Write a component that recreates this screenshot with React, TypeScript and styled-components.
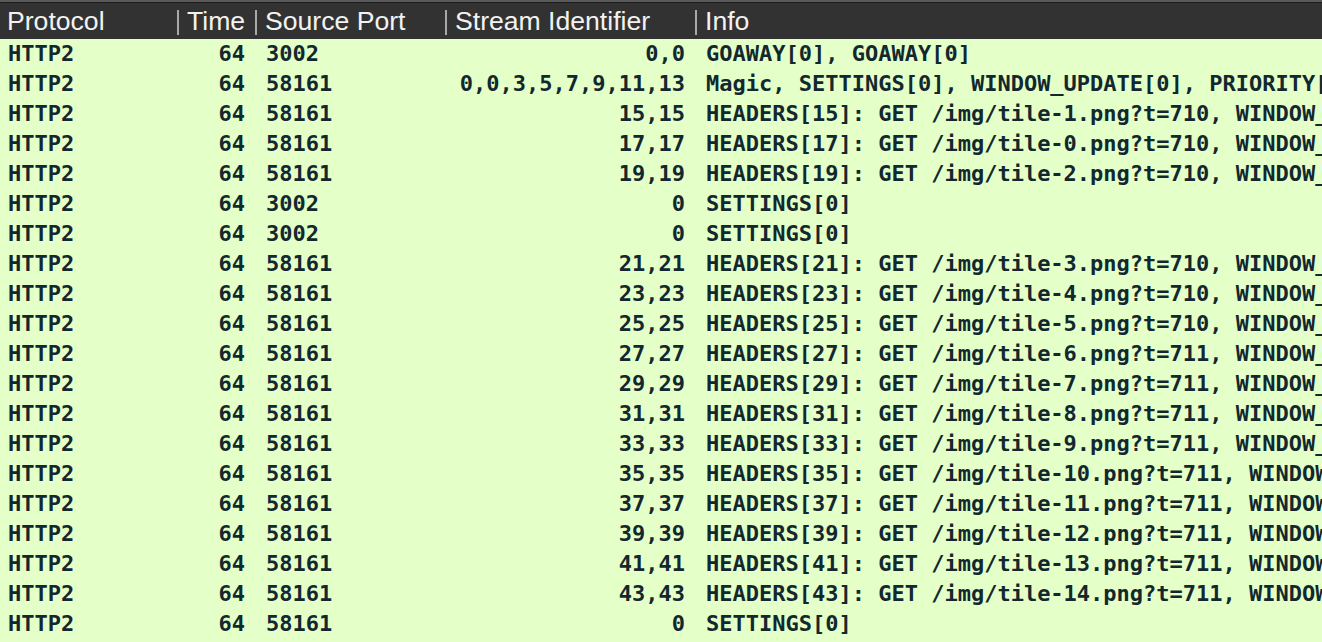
import React from "react";
import styled, { createGlobalStyle } from "styled-components";

const Global = createGlobalStyle`
  html, body { margin: 0; padding: 0; background: #e4ffc7; overflow: hidden; }
  #root { width: 1322px; height: 642px; overflow: hidden; }
`;

const COLS = "177px 78px 190px 250px 1fr";

const Table = styled.div`
  width: 1322px;
  display: flex;
  flex-direction: column;
  background: #e4ffc7;
`;

const HeaderRow = styled.div`
  display: grid;
  grid-template-columns: ${COLS};
  height: 39px;
  box-sizing: border-box;
  padding-top: 3px;
  background: linear-gradient(#5a5a5a 0 2px, #1e1e1e 2px 3px, #323232 3px);
`;

const HeaderCell = styled.div<{ $first?: boolean }>`
  display: flex;
  align-items: center;
  gap: ${(p) => (p.$first ? "0" : "8px")};
  padding-left: ${(p) => (p.$first ? "7px" : "0")};
  font-family: "Liberation Sans", Arial, sans-serif;
  font-size: 26.6px;
  color: #f2f2f2;
  white-space: nowrap;
  overflow: hidden;
  &::before {
    content: "";
    display: ${(p) => (p.$first ? "none" : "block")};
    width: 2px;
    height: 25px;
    margin-top: 3px;
    background: #a8a8a8;
    flex: none;
  }
`;

const Row = styled.div`
  display: grid;
  grid-template-columns: ${COLS};
  height: 30px;
  line-height: 30px;
  font-family: "DejaVu Sans Mono", "Liberation Mono", monospace;
  font-weight: bold;
  font-size: 22px;
  color: #12272e;
  background: #e4ffc7;
`;

const Cell = styled.div<{ $align?: "left" | "right"; $pl?: number; $pr?: number }>`
  text-align: ${(p) => p.$align ?? "left"};
  padding-left: ${(p) => p.$pl ?? 0}px;
  padding-right: ${(p) => p.$pr ?? 0}px;
  white-space: pre;
  overflow: hidden;
`;

type Pkt = { port: string; stream: string; info: string };

const hdr = (id: number, tile: number, t: number) => ({
  port: "58161",
  stream: `${id},${id}`,
  info: `HEADERS[${id}]: GET /img/tile-${tile}.png?t=${t}, WINDOW_UPDATE[${id}]`,
});

const rows: Pkt[] = [
  { port: "3002", stream: "0,0", info: "GOAWAY[0], GOAWAY[0]" },
  {
    port: "58161",
    stream: "0,0,3,5,7,9,11,13",
    info: "Magic, SETTINGS[0], WINDOW_UPDATE[0], PRIORITY[3], PRIORITY[5]",
  },
  hdr(15, 1, 710),
  hdr(17, 0, 710),
  hdr(19, 2, 710),
  { port: "3002", stream: "0", info: "SETTINGS[0]" },
  { port: "3002", stream: "0", info: "SETTINGS[0]" },
  hdr(21, 3, 710),
  hdr(23, 4, 710),
  hdr(25, 5, 710),
  hdr(27, 6, 711),
  hdr(29, 7, 711),
  hdr(31, 8, 711),
  hdr(33, 9, 711),
  hdr(35, 10, 711),
  hdr(37, 11, 711),
  hdr(39, 12, 711),
  hdr(41, 13, 711),
  hdr(43, 14, 711),
  { port: "58161", stream: "0", info: "SETTINGS[0]" },
];

export default function App() {
  return (
    <>
      <Global />
      <Table>
        <HeaderRow>
          <HeaderCell $first>Protocol</HeaderCell>
          <HeaderCell>Time</HeaderCell>
          <HeaderCell>Source Port</HeaderCell>
          <HeaderCell>Stream Identifier</HeaderCell>
          <HeaderCell>Info</HeaderCell>
        </HeaderRow>
        {rows.map((r, i) => (
          <Row key={i}>
            <Cell $pl={8}>HTTP2</Cell>
            <Cell $align="right" $pr={10}>64</Cell>
            <Cell $pl={11}>{r.port}</Cell>
            <Cell $align="right" $pr={10}>{r.stream}</Cell>
            <Cell $pl={11}>{r.info}</Cell>
          </Row>
        ))}
      </Table>
    </>
  );
}
